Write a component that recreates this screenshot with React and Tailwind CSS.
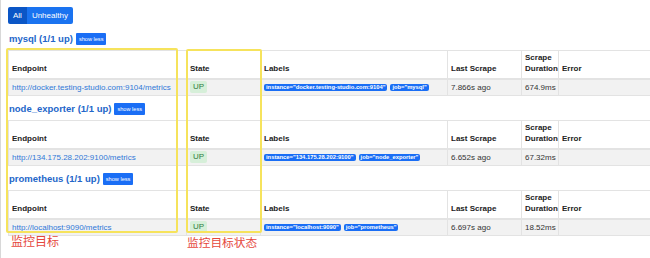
import React from 'react'

const pools = [
    {
        name: 'mysql',
        endpoint: 'http://docker.testing-studio.com:9104/metrics',
        labels: ['instance="docker.testing-studio.com:9104"', 'job="mysql"'],
        lastScrape: '7.866s ago',
        duration: '674.9ms',
    },
    {
        name: 'node_exporter',
        endpoint: 'http://134.175.28.202:9100/metrics',
        labels: ['instance="134.175.28.202:9100"', 'job="node_exporter"'],
        lastScrape: '6.652s ago',
        duration: '67.32ms',
    },
    {
        name: 'prometheus',
        endpoint: 'http://localhost:9090/metrics',
        labels: ['instance="localhost:9090"', 'job="prometheus"'],
        lastScrape: '6.697s ago',
        duration: '18.52ms',
    },
]

const th = 'border-l border-[#e3e3e3] px-[3px] pb-[4px] align-bottom text-left font-bold text-[8px] leading-[11px] text-[#222]'
const td = 'border-l border-[#e3e3e3] px-[3px] align-middle text-[8px] leading-[11px]'

const PoolTable = ({ pool }) => (
    <table className="mt-[4px] w-[660px] table-fixed border-collapse">
        <colgroup>
            <col className="w-[178px]" />
            <col className="w-[74px]" />
            <col className="w-[187px]" />
            <col className="w-[74px]" />
            <col className="w-[37px]" />
            <col />
        </colgroup>
        <thead>
            <tr className="h-[28px] border-t border-b-2 border-[#e3e3e3]">
                <th className={th}>Endpoint</th>
                <th className={th}>State</th>
                <th className={th}>Labels</th>
                <th className={th}>Last Scrape</th>
                <th className={th}>Scrape Duration</th>
                <th className={th}>Error</th>
            </tr>
        </thead>
        <tbody>
            <tr className="h-[17px] bg-[#f2f2f2] border-b border-[#e3e3e3]">
                <td className={`${td} text-[#2f78d8] whitespace-nowrap`}>{pool.endpoint}</td>
                <td className={td}>
                    <span className="inline-block rounded-[2px] bg-[#d6efd9] px-[3px] text-[8px] leading-[12px] text-[#2f7d3f]">UP</span>
                </td>
                <td className={td}>
                    <div className="flex gap-[3px] whitespace-nowrap">
                        {pool.labels.map((l) => (
                            <span key={l} className="rounded-[2px] bg-[#1a6ef5] px-[2px] text-[5.8px] leading-[7px] font-bold text-white">
                                {l}
                            </span>
                        ))}
                    </div>
                </td>
                <td className={`${td} text-[#333]`}>{pool.lastScrape}</td>
                <td className={`${td} text-[#333]`}>{pool.duration}</td>
                <td className={td}></td>
            </tr>
        </tbody>
    </table>
)

export default function App() {
    return (
        <div className="relative h-[258px] w-[650px] overflow-hidden bg-white border-l border-[#d8d8d8] font-['Liberation_Sans',Arial,sans-serif]">
            <div className="pl-[7px] pt-[7px]">
                {/* Filter buttons */}
                <div className="flex h-[17px] w-fit overflow-hidden rounded-[2px] text-[8px] text-white">
                    <span className="flex items-center bg-[#0b56c6] px-[5px]">All</span>
                    <span className="flex items-center bg-[#1a73f0] px-[5px]">Unhealthy</span>
                </div>

                {pools.map((pool, i) => (
                    <div key={pool.name}>
                        <div className={`flex h-[14px] items-center gap-[3px] pl-[1px] ${i === 0 ? 'mt-[8px]' : 'mt-[6px]'}`}>
                            <span className="text-[9.5px] font-bold text-[#2366c9]">
                                {pool.name} (1/1 up)
                            </span>
                            <span className="flex h-[12px] items-center rounded-[1px] bg-[#1a6ef5] px-[3px] text-[5.6px] text-white">
                                show less
                            </span>
                        </div>
                        <PoolTable pool={pool} />
                    </div>
                ))}
            </div>

            {/* Annotations */}
            <div className="absolute left-[5px] top-[48px] h-[185px] w-[172px] rounded-[2px] border-2 border-[#f6e35c]"></div>
            <div className="absolute left-[185px] top-[49px] h-[184px] w-[76px] rounded-[2px] border-2 border-[#f6e35c]"></div>
            <div className="absolute left-[10px] top-[233px] text-[12px] leading-[16px] text-[#e5473c] font-['Noto_Sans_CJK_SC',sans-serif]">监控目标</div>
            <div className="absolute left-[186px] top-[234px] text-[11.7px] leading-[16px] text-[#e5473c] font-['Noto_Sans_CJK_SC',sans-serif]">监控目标状态</div>
        </div>
    )
}
